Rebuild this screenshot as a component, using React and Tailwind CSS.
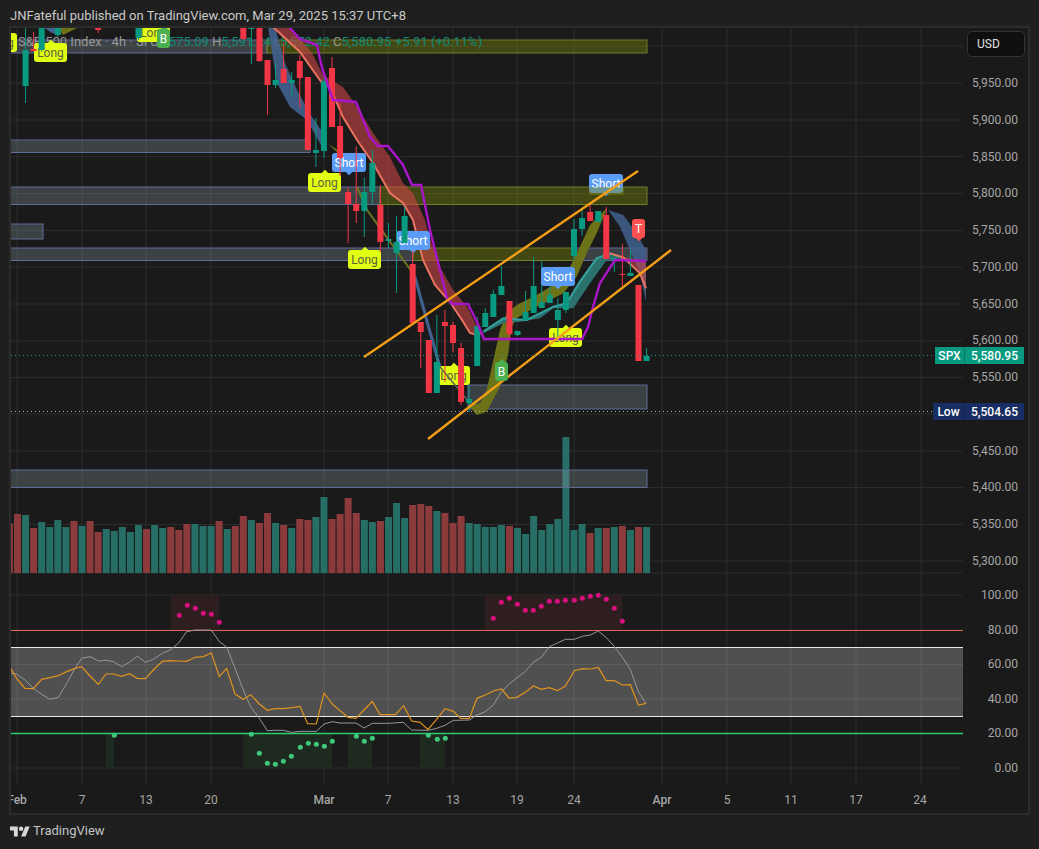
import React from "react";

// page coordinates are used for everything inside the chart svg
const PLOT_X = 11;
const PLOT_Y = 28;
const VIEW = `${PLOT_X} ${PLOT_Y} 952 757`;

const barX = (i) => 17.5 + 8.065 * i;
const pts = (arr) => arr.map((p) => p.join(",")).join(" ");
// points read off the zoomed crops
const z2 = (arr) => arr.map(([x, y]) => [340 + x / 3, 170 + y / 3]);
const oscA = (arr) => arr.map(([x, y]) => [x / 3, 580 + y / 3]);
const oscB = (arr) => arr.map(([x, y]) => [340 + x / 3, 580 + y / 3]);

const prices = ["5,950.00", "5,900.00", "5,850.00", "5,800.00", "5,750.00", "5,700.00", "5,650.00", "5,600.00", "5,550.00", "5,500.00", "5,450.00", "5,400.00", "5,350.00", "5,300.00"];
const oscTicks = ["100.00", "80.00", "60.00", "40.00", "20.00", "0.00"];

const hLines = [46, 83, 120, 156.5, 193.5, 230.5, 267, 304, 341, 377.5, 414, 451, 487.5, 524.5, 561, 573, 595, 630, 664.5, 699, 733.5, 768];
const vLines = [17, 82, 146, 211, 324, 388, 453, 517, 574, 662, 727, 791, 856, 921];

const timeTicks = [
  { x: 17, t: "Feb", bold: true },
  { x: 82, t: "7" },
  { x: 146, t: "13" },
  { x: 211, t: "20" },
  { x: 324, t: "Mar", bold: true },
  { x: 388, t: "7" },
  { x: 453, t: "13" },
  { x: 517, t: "19" },
  { x: 574, t: "24" },
  { x: 662, t: "Apr", bold: true },
  { x: 727, t: "5" },
  { x: 791, t: "11" },
  { x: 856, t: "17" },
  { x: 920, t: "24" },
];

const volumes = [
  ["r", 280], ["r", 252], ["g", 255], ["r", 294], ["g", 276], ["g", 291], ["g", 270], ["g", 291], ["r", 273], ["g", 288],
  ["r", 273], ["r", 306], ["g", 297], ["g", 303], ["g", 291], ["g", 306], ["g", 285], ["r", 297], ["g", 285], ["g", 294],
  ["r", 291], ["r", 300], ["r", 282], ["g", 282], ["g", 288], ["g", 288], ["r", 273], ["g", 297], ["r", 288], ["r", 258],
  ["g", 270], ["r", 279], ["r", 249], ["g", 279], ["r", 285], ["g", 294], ["r", 267], ["r", 270], ["g", 261], ["g", 201],
  ["r", 267], ["r", 252], ["r", 204], ["r", 249], ["g", 270], ["g", 276], ["r", 273], ["g", 261], ["g", 219], ["g", 264],
  ["r", 225], ["r", 222], ["r", 228], ["g", 243], ["r", 249], ["r", 279], ["r", 258], ["g", 279], ["g", 282], ["g", 291],
  ["g", 291], ["g", 285], ["r", 288], ["g", 294], ["g", 312], ["g", 258], ["g", 300], ["g", 282], ["g", 267], ["g", 21],
  ["g", 300], ["g", 282], ["r", 309], ["g", 294], ["r", 294], ["g", 291], ["r", 288], ["g", 300], ["r", 291], ["g", 291],
];

// [bar index, color, body top, body bottom, wick top, wick bottom]
const candles = [
  [1, "g", 50, 86, 27, 103],
  [2, "r", 49, 51, 32, 51],
  [3, "g", 27, 50, 27, 52],
  [5, "g", 27, 35, 27, 37],
  [10, "r", 28, 30, 27, 33],
  [15, "g", 27, 38, 27, 40],
  [28, "r", 27, 39, 27, 40],
  [29, "g", 27, 29, 27, 64],
  [30, "r", 27, 61, 27, 62],
  [31, "r", 60, 85, 60, 115],
  [32, "g", 80, 85, 63, 88],
  [33, "r", 69, 83, 43, 83],
  [34, "g", 80, 83, 72, 97],
  [35, "r", 61, 78, 55, 108],
  [36, "r", 77, 150, 77, 150],
  [37, "g", 150, 153, 118, 167],
  [38, "g", 81, 151, 77, 158],
  [39, "r", 68, 127, 57, 127],
  [40, "r", 126, 158, 103, 176],
  [41, "r", 192, 204, 187, 243],
  [42, "r", 204, 211, 146, 223],
  [43, "g", 192, 211, 178, 237],
  [44, "g", 163, 192, 150, 204],
  [45, "r", 205, 242, 185, 252],
  [46, "g", 239, 241, 223, 248],
  [47, "g", 242, 253, 216, 293],
  [48, "g", 216, 243, 207, 243],
  [49, "r", 264, 323, 251, 323],
  [50, "r", 322, 332, 322, 368],
  [51, "r", 340, 393, 340, 393],
  [52, "g", 362, 393, 315, 393],
  [53, "r", 322, 326, 310, 382],
  [54, "r", 325, 343, 322, 352],
  [55, "r", 348, 402, 343, 405],
  [56, "g", 399, 403, 385, 412],
  [57, "g", 326, 366, 317, 366],
  [58, "g", 313, 327, 308, 327],
  [59, "g", 294, 317, 290, 317],
  [60, "g", 286, 295, 266, 295],
  [61, "r", 301, 334, 301, 341],
  [62, "g", 331, 335, 331, 336],
  [63, "g", 312, 320, 291, 320],
  [64, "g", 286, 313, 257, 313],
  [65, "g", 302, 308, 261, 308],
  [66, "g", 295, 303, 286, 303],
  [67, "g", 310, 320, 298, 337],
  [68, "g", 292, 310, 292, 313],
  [69, "g", 229, 256, 219, 260],
  [70, "g", 218, 229, 209, 236],
  [71, "r", 212, 221, 203, 221],
  [72, "g", 211, 222, 211, 222],
  [73, "r", 215, 259, 207, 259],
  [74, "g", 258, 260, 258, 272],
  [75, "r", 274, 275, 244, 288],
  [76, "g", 273, 276, 250, 276],
  [77, "r", 285, 361, 285, 361],
  [78, "g", 356, 361, 348, 361],
];

const grayBoxes = [
  [10, 40, 257, 13],
  [10, 140, 300, 12.5],
  [10, 187, 370, 17.5],
  [10, 224, 33, 15],
  [10, 248, 403, 12.5],
  [575, 248, 72, 12.5],
  [468, 385, 179, 24],
  [10, 470, 637, 17.5],
];
const oliveBoxes = [
  [267, 40, 380, 13],
  [380, 187, 267, 17.5],
  [413, 248, 162, 12.5],
];

const redRibbonEdge = [[273, 27], [300, 52], [322, 83], [330, 87], [343, 117], [357, 140], [373, 163], [390, 193], [403, 203], [413, 220], [423, 260], [435, 285], [450, 302], [462, 320], [470, 333], [477, 335]];
const redRibbonTop = [[290, 27], [312, 53], [323, 75], [343, 87], [357, 107], [373, 133], [390, 157], [403, 183], [413, 193], [425, 220], [428, 233], [440, 267], [453, 290], [468, 308], [477, 327], [483, 335]];

const blueRibbon = [[268, 27], [277, 83], [290, 107], [307, 120], [322, 147], [323, 133], [312, 117], [297, 90], [285, 63], [275, 27]];

const oliveRibbon = z2([[385, 705], [420, 700], [440, 660], [460, 570], [480, 480], [500, 430], [530, 405], [590, 375], [640, 345], [690, 290], [720, 230], [750, 165], [800, 115], [800, 118], [770, 190], [740, 250], [710, 320], [670, 370], [620, 395], [580, 415], [530, 445], [515, 470], [505, 550], [480, 650], [440, 725], [410, 735]]);
const tealTop = z2([[430, 485], [490, 445], [560, 450], [640, 410], [680, 400], [720, 335], [770, 265], [810, 250], [850, 265]]);
const tealBottom = z2([[850, 262], [800, 270], [750, 340], [700, 415], [640, 415], [600, 445], [540, 455], [490, 460], [430, 490]]);
const rightBlue = z2([[805, 120], [850, 135], [890, 190], [918, 240], [918, 395], [900, 310], [870, 240], [840, 170]]);
const rightRedEdge = z2([[810, 250], [850, 262], [900, 310], [918, 355]]);
const rightRed = z2([[810, 250], [850, 262], [918, 272], [918, 355], [900, 310], [850, 262]]);

const purpleLine = [[290, 28], [300, 39], [317, 45], [322, 68], [333, 100], [356, 102], [370, 137], [378, 146], [388, 146], [403, 165], [412, 185], [421, 185], [430, 230], [447, 298], [452, 304], [468, 304], [477, 322], [484, 339], [582, 339], [588, 327], [593, 307], [600, 283], [615, 260], [646, 261]];

const orangeOsc = [
  ...oscA([[30, 262], [50, 295], [75, 325], [100, 326], [125, 298], [150, 293], [175, 287], [200, 275], [225, 265], [245, 260], [270, 288], [295, 313], [318, 282], [340, 282], [365, 289], [388, 281], [412, 295], [436, 296], [460, 270], [487, 244], [510, 242], [535, 243], [560, 244], [585, 232], [610, 230], [634, 219], [658, 289], [680, 265], [705, 342], [730, 358], [752, 344], [778, 372], [802, 391], [826, 386], [850, 386], [875, 383], [900, 379], [923, 431], [949, 432], [972, 339], [997, 372], [1020, 392]]),
  ...oscB([[24, 412], [48, 415], [72, 390], [97, 364], [120, 404], [145, 404], [166, 404], [191, 377], [215, 423], [240, 427], [264, 448], [290, 418], [315, 386], [340, 394], [362, 415], [388, 415], [411, 355], [436, 345], [460, 333], [485, 327], [507, 354], [530, 352], [556, 337], [580, 318], [604, 328], [628, 323], [652, 332], [676, 318], [703, 272], [727, 266], [751, 267], [775, 262], [798, 302], [823, 302], [847, 315], [871, 314], [895, 375], [918, 370]]),
];
const grayOsc = [
  ...oscA([[30, 280], [50, 282], [75, 300], [100, 325], [125, 343], [150, 358], [175, 352], [200, 310], [225, 265], [245, 235], [270, 230], [295, 243], [318, 241], [340, 245], [365, 260], [388, 247], [412, 228], [436, 247], [460, 238], [487, 220], [510, 210], [535, 190], [560, 155], [585, 150], [634, 150], [658, 185], [680, 201], [705, 265], [730, 330], [752, 380], [778, 415], [802, 452], [826, 451], [850, 451], [875, 457], [900, 454], [925, 454], [949, 454], [972, 432], [997, 425], [1020, 429]]),
  ...oscB([[48, 429], [72, 444], [97, 430], [145, 430], [190, 427], [215, 450], [265, 451], [290, 445], [315, 436], [340, 421], [388, 420], [411, 405], [436, 395], [460, 375], [485, 335], [507, 312], [556, 274], [580, 247], [604, 232], [628, 200], [652, 189], [676, 178], [703, 178], [727, 169], [751, 165], [775, 153], [798, 172], [823, 199], [847, 232], [871, 268], [895, 335], [918, 370]]),
];

const pinkDots = [
  ...oscA([[538, 106], [562, 76], [586, 85], [610, 100], [634, 103], [658, 127]]),
  ...oscB([[460, 115], [484, 67], [508, 55], [532, 73], [556, 91], [580, 91], [604, 79], [628, 64], [652, 64], [676, 61], [703, 61], [727, 55], [751, 49], [775, 46], [799, 58], [823, 85], [847, 124]]),
];
const greenDots = [
  ...oscA([[343, 466], [754, 463], [778, 520], [802, 550], [826, 553], [850, 544], [874, 529], [901, 502], [925, 490], [949, 493], [973, 499], [997, 484]]),
  ...oscB([[49, 469], [73, 484], [97, 475], [265, 466], [292, 478], [316, 475]]),
];

// layer 0 lies under the ribbons, 1 over the ribbons, 2 over the candles too
const signals = [
  { kind: "long", text: "Long", x: -16, y: 33, layer: 0 },
  { kind: "long", text: "Long", x: 34, y: 43, layer: 0 },
  { kind: "long", text: "Long", x: 137, y: 23, layer: 0 },
  { kind: "buy", text: "B", x: 157, y: 29, layer: 2 },
  { kind: "short", text: "Short", x: 332, y: 153, layer: 1 },
  { kind: "long", text: "Long", x: 308, y: 173, layer: 0 },
  { kind: "short", text: "Short", x: 396, y: 231, layer: 1 },
  { kind: "long", text: "Long", x: 348, y: 250, layer: 0 },
  { kind: "long", text: "Long", x: 437, y: 366, layer: 0 },
  { kind: "buy", text: "B", x: 495, y: 362, layer: 2 },
  { kind: "short", text: "Short", x: 541, y: 267, layer: 2 },
  { kind: "long", text: "Long", x: 549, y: 328, layer: 0 },
  { kind: "short", text: "Short", x: 589, y: 174, layer: 0 },
  { kind: "top", text: "T", x: 632, y: 219, layer: 2 },
];

const signalStyles = {
  long: { box: "w-[33px] h-[19px] bg-[#e1ff12] text-[#5c6040]", tip: "bg-[#e1ff12] left-[14px] -top-[2px]" },
  short: { box: "w-[34px] h-[19px] bg-[#5b9cf6] text-white", tip: "bg-[#5b9cf6] left-[14px] -bottom-[2px]" },
  buy: { box: "w-[13px] h-[19px] bg-[#4caf50] text-white", tip: "bg-[#4caf50] left-[3.5px] -top-[2px]" },
  top: { box: "w-[13px] h-[19px] bg-[#ff5252] text-white", tip: "bg-[#ff5252] left-[3.5px] -bottom-[2px]" },
};

function Signal({ kind, text, x, y }) {
  const s = signalStyles[kind];
  return (
    <div
      className={`absolute flex items-center justify-center rounded-[3px] text-[12px] leading-none ${s.box}`}
      style={{ left: x - PLOT_X, top: y - PLOT_Y }}
    >
      <span className={`absolute w-[6px] h-[6px] rotate-45 ${s.tip}`} />
      <span className="relative">{text}</span>
    </div>
  );
}

function Signals({ layer }) {
  return signals
    .filter((s) => s.layer === layer)
    .map((s, i) => <Signal key={i} {...s} />);
}

// grid, volume and zones: everything the legend and the signals lie over
function BackLayer() {
  return (
    <svg className="absolute inset-0" width="952" height="757" viewBox={VIEW}>
      {hLines.map((y) => (
        <line key={y} x1="11" x2="963" y1={y} y2={y} stroke="#2c2c2c" strokeWidth="1" />
      ))}
      {vLines.map((x) => (
        <line key={x} x1={x} x2={x} y1="28" y2="785" stroke="#2c2c2c" strokeWidth="1" />
      ))}
      {volumes.map(([c, top], i) => (
        <rect
          key={i}
          x={barX(i - 1) - 3.5}
          y={430 + top / 3}
          width="7"
          height={573 - (430 + top / 3)}
          fill={c === "g" ? "#266e66" : "#8c3b3c"}
        />
      ))}
      {grayBoxes.map(([x, y, w, h], i) => (
        <rect key={i} x={x} y={y} width={w} height={h} fill="#8794a0" fillOpacity="0.32" stroke="#5f6d96" strokeWidth="1" />
      ))}
      {oliveBoxes.map(([x, y, w, h], i) => (
        <rect key={i} x={x} y={y} width={w} height={h} fill="#828c0a" fillOpacity="0.4" stroke="#6f7f2b" strokeWidth="1" />
      ))}
    </svg>
  );
}

function Ribbons() {
  return (
    <svg className="absolute inset-0" width="952" height="757" viewBox={VIEW}>
      {/* the top Short tag is tinted by the zone */}
      <rect x="589" y="187" width="35" height="8" fill="#828c0a" fillOpacity="0.4" />

      <polygon points="45,28 58,28 58,35 50,32" fill="#41628f" />
      <polygon points="58,28 77,28 63,35" fill="#6b7218" />
      <polygon points={pts(blueRibbon)} fill="#41628f" fillOpacity="0.9" />
      <polygon points={pts([[328, 144], [338, 150], [338, 153]])} fill="#6b7218" />
      <polyline points="357,187 367,210 412,272" fill="none" stroke="#6d7320" strokeWidth="2" />
      <polyline points="415,277 428,325 440,367" fill="none" stroke="#41628f" strokeWidth="3" />
      <polyline points="440,367 455,385 470,403" fill="none" stroke="#5d6a50" strokeWidth="1.5" />
      <polygon points={pts(oliveRibbon)} fill="#6b7218" />
      <polygon points={pts([...tealTop, ...tealBottom])} fill="#2b716e" />
      <polyline points={pts(tealTop)} fill="none" stroke="#35a29d" strokeWidth="2" />
      <polygon points={pts([...redRibbonEdge, ...[...redRibbonTop].reverse()])} fill="#c64646" fillOpacity="0.62" />
      <polyline points={pts(redRibbonEdge)} fill="none" stroke="#e8735f" strokeWidth="2" />
      <polygon points={pts(rightBlue)} fill="#41628f" fillOpacity="0.85" />
      <polygon points={pts(rightRed)} fill="#c64646" fillOpacity="0.6" />
      <polyline points={pts(rightRedEdge)} fill="none" stroke="#e8735f" strokeWidth="2" />
    </svg>
  );
}

function Candles() {
  return (
    <svg className="absolute inset-0" width="952" height="757" viewBox={VIEW}>
      {candles.map(([i, c, top, bottom, wTop, wBottom]) => {
        const color = c === "g" ? "#089981" : "#f23645";
        const x = barX(i);
        return (
          <g key={i}>
            <line x1={x} x2={x} y1={wTop} y2={wBottom} stroke={color} strokeWidth="1" />
            <rect x={x - 3} y={top} width="6" height={bottom - top} fill={color} />
          </g>
        );
      })}

      <polyline points={pts(purpleLine)} fill="none" stroke="#a915c9" strokeWidth="2.4" />
      <line x1="364" y1="357" x2="638" y2="171" stroke="#f59f16" strokeWidth="2.4" />
      <line x1="428" y1="439" x2="671" y2="250" stroke="#f59f16" strokeWidth="2.4" />

      {/* last price and low */}
      <line x1="11" x2="935" y1="355.5" y2="355.5" stroke="#2f8f80" strokeWidth="1" strokeDasharray="1 3" />
      <line x1="11" x2="933" y1="411.5" y2="411.5" stroke="#a8a8a8" strokeWidth="1" strokeDasharray="1 3" />

      {/* oscillator */}
      <rect x="171" y="595" width="48" height="35" fill="#2f1e1f" />
      <rect x="485" y="595" width="137" height="35" fill="#2f1e1f" />
      <rect x="106" y="733" width="8" height="35" fill="#1e2a20" />
      <rect x="243" y="733" width="89" height="35" fill="#1e2a20" />
      <rect x="348" y="733" width="24" height="35" fill="#1e2a20" />
      <rect x="420" y="733" width="25" height="35" fill="#1e2a20" />
      <rect x="11" y="647.5" width="952" height="69" fill="#ffffff" fillOpacity="0.24" />
      <line x1="11" x2="963" y1="630.5" y2="630.5" stroke="#e0605a" strokeWidth="1" />
      <line x1="11" x2="963" y1="647.5" y2="647.5" stroke="#e6e6e6" strokeWidth="1" />
      <line x1="11" x2="963" y1="716.5" y2="716.5" stroke="#e6e6e6" strokeWidth="1" />
      <line x1="11" x2="963" y1="733.5" y2="733.5" stroke="#2ecc71" strokeWidth="1.6" />
      <polyline points={pts(grayOsc)} fill="none" stroke="#979797" strokeWidth="1" />
      <polyline points={pts(orangeOsc)} fill="none" stroke="#e0931f" strokeWidth="1.2" />
      {pinkDots.map(([x, y], i) => (
        <circle key={i} cx={x} cy={y} r="2.5" fill="#d6107e" />
      ))}
      {greenDots.map(([x, y], i) => (
        <circle key={i} cx={x} cy={y} r="2.5" fill="#3ec97a" />
      ))}
    </svg>
  );
}

function Legend() {
  return (
    <div className="absolute left-[7px] top-[6px] flex whitespace-nowrap text-[13px] leading-[16px] text-[#989898]">
      <span className="w-[132px]">S&amp;P 500 Index · 4h · SP</span>
      <span className="w-[62px]">O<span className="text-[#0f8a76]">5,575.09</span></span>
      <span className="w-[61px]">H<span className="text-[#0f8a76]">5,591.24</span></span>
      <span className="w-[60px]">L<span className="text-[#0f8a76]">5,572.42</span></span>
      <span className="w-[62px]">C<span className="text-[#0f8a76]">5,580.95</span></span>
      <span className="text-[#0f8a76]">+5.91 (+0.11%)</span>
    </div>
  );
}

function PriceAxis() {
  return (
    <div className="flex-1 text-[12px] leading-none text-[#a6a6a6]">
      <div className="ml-[4px] mt-[3px] w-[58px] h-[26px] flex items-center pl-[9px] rounded-[5px] bg-[#0f0f0f] border border-[#333333] text-[#e0e0e0]">
        USD
      </div>
      <div className="mt-[7.6px]">
        {prices.map((p) => (
          <div key={p} className="h-[36.77px] flex items-center justify-end pr-[10px]">{p}</div>
        ))}
      </div>
      <div className="-mt-[1.7px]">
        {oscTicks.map((p) => (
          <div key={p} className="h-[34.6px] flex items-center justify-end pr-[10px]">{p}</div>
        ))}
      </div>
    </div>
  );
}

function PriceTag({ label, value, className, tagClassName }) {
  return (
    <div className={`absolute right-[4px] flex h-[17px] items-center text-[12px] font-medium leading-none text-white ${className}`}>
      <div className={`h-full flex items-center justify-center ${tagClassName}`}>{label}</div>
      <div className="w-[60px] h-full flex items-center justify-center border-l border-[#00000033]">{value}</div>
    </div>
  );
}

export default function App() {
  return (
    <div className="w-[1039px] h-[849px] flex flex-col overflow-hidden bg-[#1f1f1f] [font-family:Roboto,sans-serif]">
      <div className="h-[26px] pl-[10px] pt-[7px] text-[13px] leading-[18px] text-[#c9c9c9]">
        JNFateful published on TradingView.com, Mar 29, 2025 15:37 UTC+8
      </div>

      <div className="ml-[9px] w-[1021px] h-[789px] flex flex-col border-2 border-[#2b2b2b] bg-[#1a1a1a]">
        <div className="relative flex h-[757px]">
          <div className="relative w-[952px] h-full overflow-hidden">
            <BackLayer />
            <Legend />
            <Signals layer={0} />
            <Ribbons />
            <Signals layer={1} />
            <Candles />
            <Signals layer={2} />
          </div>
          <PriceAxis />
          <PriceTag label="SPX" value="5,580.95" className="top-[319px] bg-[#089981]" tagClassName="w-[29px]" />
          <PriceTag label="Low" value="5,504.65" className="top-[375px] bg-[#172d63]" tagClassName="w-[31px]" />
        </div>
        <div className="relative flex-1 overflow-hidden text-[12px] leading-none text-[#a6a6a6]">
          {timeTicks.map((t) => (
            <span
              key={t.x}
              className={`absolute top-[9px] -translate-x-1/2 ${t.bold ? "font-medium" : ""}`}
              style={{ left: t.x - PLOT_X }}
            >
              {t.t}
            </span>
          ))}
        </div>
      </div>

      <div className="flex items-center gap-[3px] pl-[10px] pt-[7px] text-[13px] leading-[18px] text-[#c4c4c4]">
        <svg width="20" height="11" viewBox="0 4 36 18" fill="#d8d8d8">
          <path d="M14 22H7V11H0V4h14v18zM28 22h-8l7.5-18h8L28 22z" />
          <circle cx="20" cy="8" r="4" />
        </svg>
        <span>TradingView</span>
      </div>
    </div>
  );
}
